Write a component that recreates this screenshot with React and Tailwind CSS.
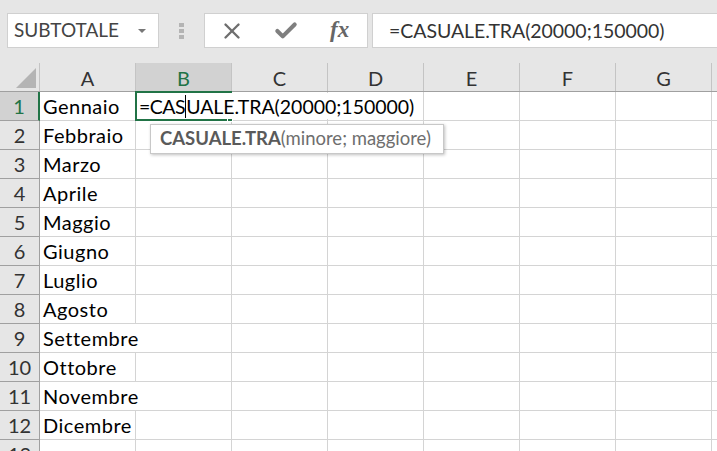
import { X, Check } from 'lucide-react';

const MONTHS = ['Gennaio', 'Febbraio', 'Marzo', 'Aprile', 'Maggio', 'Giugno', 'Luglio', 'Agosto', 'Settembre', 'Ottobre', 'Novembre', 'Dicembre', ''];
const COLS = ['B', 'C', 'D', 'E', 'F', 'G', ''];
const LONG = ['Settembre', 'Novembre'];

function Toolbar() {
  return (
    <div className="h-[63px] bg-[#e6e6e6] flex pt-[13px] pl-[7px]">
      <div className="w-[152px] h-[35px] bg-white border border-[#d0d0d0] flex items-center justify-between pl-[6px] pr-[12px] text-[#444] text-[19px]">
        <span>SUBTOTALE</span>
        <span className="w-0 h-0 border-x-[4px] border-x-transparent border-t-[4px] border-t-[#777]" />
      </div>
      <div className="w-[45px] h-[35px] flex flex-col items-center justify-center gap-[2px]">
        <span className="w-[5px] h-[4px] bg-[#b4b4b4]" />
        <span className="w-[5px] h-[4px] bg-[#b4b4b4]" />
        <span className="w-[5px] h-[4px] bg-[#b4b4b4]" />
      </div>
      <div className="w-[164px] h-[35px] bg-white border border-[#d0d0d0] flex items-center pl-[14px]">
        <X size={26} strokeWidth={2.2} className="text-[#6e6e6e]" />
        <Check size={26} strokeWidth={3.8} className="text-[#7f7f7f] ml-[28px]" />
        <span className="ml-[31px] text-[#666] text-[23px] italic font-bold font-['Liberation_Serif',serif]">fx</span>
      </div>
      <div className="flex-1 ml-[4px] h-[35px] bg-white border border-r-0 border-[#d0d0d0] flex items-center pl-[16px] text-[#333] text-[19.5px] tracking-[-0.05px]">
        =CASUALE.TRA(20000;150000)
      </div>
    </div>
  );
}

function HeaderRow() {
  return (
    <div className="flex h-[29px] bg-[#e6e6e6] border-b border-[#a0a0a0] text-[#333] text-[20px]">
      <div className="w-[40px] shrink-0 border-r border-[#c4c4c4] relative">
        <span className="absolute right-[3px] bottom-[3px] w-0 h-0 border-l-[20px] border-l-transparent border-b-[20px] border-b-[#b4b4b4]" />
      </div>
      <div className="w-[96px] shrink-0 border-r border-[#c4c4c4] text-center leading-[30px]">A</div>
      {COLS.map((c) => (
        <div
          key={c}
          className={c === 'B'
            ? 'w-[96px] shrink-0 bg-[#d2d2d2] border-r border-r-[#c4c4c4] text-[#217346] text-center leading-[30px]'
            : 'w-[96px] shrink-0 border-r border-[#c4c4c4] text-center leading-[30px]'}>
          {c}
        </div>
      ))}
    </div>
  );
}

function Row({ num, month }) {
  const first = num === 1;
  return (
    <div className="flex h-[29px] text-[20px]">
      <div className={first
        ? 'w-[40px] shrink-0 bg-[#d2d2d2] border-r-2 border-r-[#217346] border-b border-b-[#a0a0a0] text-[#217346] text-center leading-[29px]'
        : 'w-[40px] shrink-0 bg-[#e6e6e6] border-r border-r-[#a0a0a0] border-b border-b-[#a0a0a0] text-[#333] text-center leading-[29px]'}>
        {num}
      </div>
      <div className={LONG.includes(month)
        ? 'w-[96px] shrink-0 border-b border-[#d4d4d4] pl-[3px] leading-[28px] tracking-[0.5px] text-black whitespace-nowrap'
        : 'w-[96px] shrink-0 border-b border-r border-[#d4d4d4] pl-[3px] leading-[28px] tracking-[0.5px] text-black whitespace-nowrap'}>
        {month}
      </div>
      {COLS.map((c) => (
        <div key={c} className="w-[96px] shrink-0 border-b border-r border-[#d4d4d4]" />
      ))}
    </div>
  );
}

export default function App() {
  return (
    <div className="w-[717px] h-[451px] overflow-hidden bg-white relative font-['Lato',sans-serif]">
      <Toolbar />
      <HeaderRow />
      {MONTHS.map((m, i) => (
        <Row key={i} num={i + 1} month={m} />
      ))}

      {/* cell being edited spills over C and D */}
      <div className="absolute left-[135px] top-[91px] w-[97px] h-[30px] border-2 border-[#217346]">
        <span className="absolute right-[-3px] bottom-[-3px] w-[6px] h-[5px] bg-[#217346] border border-white" />
      </div>
      <div className="absolute left-[137px] top-[93px] h-[26px] pl-[2px] pr-[2px] bg-white text-black text-[19.5px] leading-[28px] whitespace-nowrap">
        <span className="tracking-[-0.5px]">=CAS</span><span className="border-l border-black" /><span className="tracking-[-0.02px]">UALE.TRA(20000;150000)</span>
      </div>

      <div className="absolute left-[150px] top-[124px] w-[294px] h-[30px] bg-white border border-[#c8c8c8] shadow-[1px_1px_3px_rgba(0,0,0,0.25)] pl-[9px] text-[18.5px] leading-[27px] text-[#6e6e6e] whitespace-nowrap">
        <b className="text-[#5a5a5a]">CASUALE.TRA</b>(minore; maggiore)
      </div>
    </div>
  );
}
